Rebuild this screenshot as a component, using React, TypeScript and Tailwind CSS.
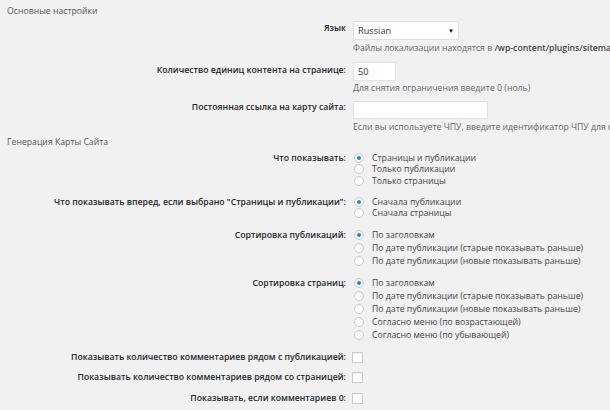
import type { ReactNode } from "react"

const font = { fontFamily: '"Open Sans", "Noto Sans", sans-serif' }

function Label({ children, className = "" }: { children: ReactNode; className?: string }) {
  return (
    <div className={`w-[346px] shrink-0 text-right font-semibold text-[#23282d] whitespace-nowrap ${className}`}>
      {children}
    </div>
  )
}

function Radio({ checked }: { checked?: boolean }) {
  return (
    <span className="w-[10px] h-[10px] rounded-full border border-[#c8ccd0] bg-white flex items-center justify-center shrink-0 ml-[1px] shadow-[inset_0_1px_1px_rgba(0,0,0,0.06)]">
      {checked && <span className="w-[4px] h-[4px] rounded-full bg-[#1e8cbe]" />}
    </span>
  )
}

function RadioGroup({
  label,
  options,
  rowH,
  className = "",
}: {
  label: string
  options: string[]
  rowH: "short" | "tall"
  className?: string
}) {
  const h = rowH === "short" ? "h-[11.5px]" : "h-[13px]"
  return (
    <div className={`flex ${className}`}>
      <Label className={`${h} flex items-center justify-end`}>{label}</Label>
      <div className="ml-[7px] flex flex-col">
        {options.map((o, i) => (
          <div key={o} className={`${h} flex items-center`}>
            <Radio checked={i === 0} />
            <span className="ml-[8px] text-[#444] whitespace-nowrap">{o}</span>
          </div>
        ))}
      </div>
    </div>
  )
}

function CheckRow({ label, className = "" }: { label: string; className?: string }) {
  return (
    <div className={`flex h-[12px] items-center ${className}`}>
      <Label className="flex items-center justify-end">{label}</Label>
      <span className="ml-[6px] w-[11px] h-[11px] border border-[#c8ccd0] bg-white shadow-[inset_0_1px_1px_rgba(0,0,0,0.06)]" />
    </div>
  )
}

export default function App() {
  return (
    <div
      className="w-[610px] h-[410px] overflow-hidden bg-[#f1f1f1] text-[8.7px] leading-[12px] flex flex-col"
      style={font}
    >
      <div className="mt-[5px] pl-[7px] text-[#555]">Основные настройки</div>

      {/* Язык */}
      <div className="flex mt-[4px]">
        <Label className="pt-[1px]">Язык</Label>
        <div className="ml-[7px] flex flex-col">
          <div className="w-[106px] h-[19px] bg-white border border-[#e2e2e2] flex items-center justify-between pl-[4px] pr-[4px] text-[9.2px] text-[#32373c]">
            <span>Russian</span>
            <span className="text-[6px] text-black">▼</span>
          </div>
          <div className="mt-[2px] text-[#666] whitespace-nowrap">
            Файлы локализации находятся в <span className="font-semibold text-[#444]">/wp-content/plugins/sitemap/languages</span>
          </div>
        </div>
      </div>

      {/* Количество */}
      <div className="flex mt-[8px]">
        <Label className="pt-[2px]">Количество единиц контента на странице:</Label>
        <div className="ml-[7px] flex flex-col">
          <div className="w-[43px] h-[19px] bg-white border border-[#e2e2e2] flex items-center pl-[4px] text-[9.2px] text-[#32373c]">
            50
          </div>
          <div className="mt-[1px] text-[#666] whitespace-nowrap">Для снятия ограничения введите 0 (ноль)</div>
        </div>
      </div>

      {/* Постоянная ссылка */}
      <div className="flex mt-[7px]">
        <Label className="pt-[0px]">Постоянная ссылка на карту сайта:</Label>
        <div className="ml-[7px] flex flex-col">
          <div className="w-[135px] h-[18px] bg-white border border-[#e2e2e2]" />
          <div className="mt-[2px] text-[#666] whitespace-nowrap">
            Если вы используете ЧПУ, введите идентификатор ЧПУ для страницы карты сайта
          </div>
        </div>
      </div>

      <div className="mt-[3px] pl-[7px] text-[#555]">Генерация Карты Сайта</div>

      <RadioGroup
        className="mt-[4px]"
        rowH="short"
        label="Что показывать:"
        options={["Страницы и публикации", "Только публикации", "Только страницы"]}
      />
      <RadioGroup
        className="mt-[9.5px]"
        rowH="short"
        label={'Что показывать вперед, если выбрано "Страницы и публикации":'}
        options={["Сначала публикации", "Сначала страницы"]}
      />
      <RadioGroup
        className="mt-[9px]"
        rowH="tall"
        label="Сортировка публикаций:"
        options={[
          "По заголовкам",
          "По дате публикации (старые показывать раньше)",
          "По дате публикации (новые показывать раньше)",
        ]}
      />
      <RadioGroup
        className="mt-[9.5px]"
        rowH="tall"
        label="Сортировка страниц:"
        options={[
          "По заголовкам",
          "По дате публикации (старые показывать раньше)",
          "По дате публикации (новые показывать раньше)",
          "Согласно меню (по возрастающей)",
          "Согласно меню (по убывающей)",
        ]}
      />

      <CheckRow className="mt-[9.5px]" label="Показывать количество комментариев рядом с публикацией:" />
      <CheckRow className="mt-[8px]" label="Показывать количество комментариев рядом со страницей:" />
      <CheckRow className="mt-[9px]" label="Показывать, если комментариев 0:" />
    </div>
  )
}
